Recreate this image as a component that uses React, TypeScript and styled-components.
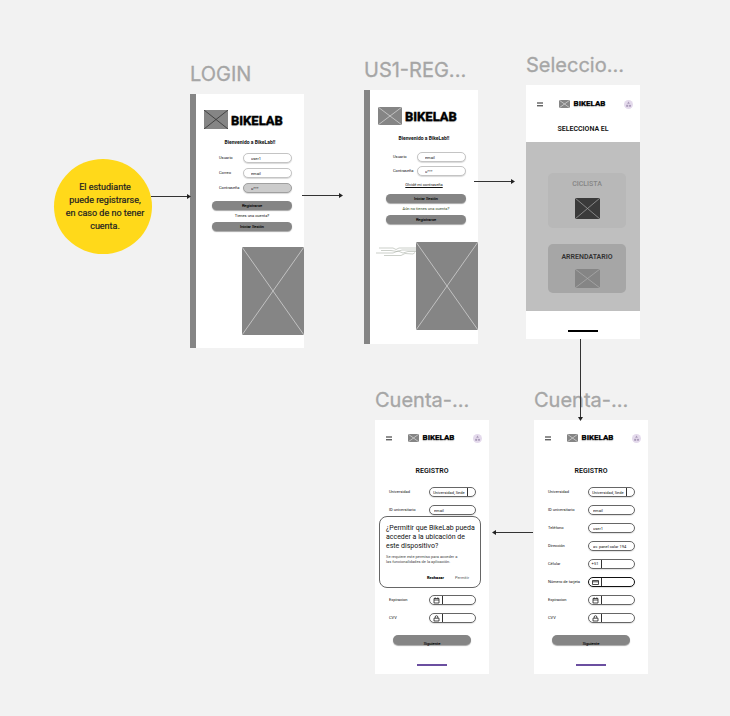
import React from "react";
import styled, { createGlobalStyle, css } from "styled-components";

const sans = `Roboto, "Liberation Sans", sans-serif`;

const GlobalStyle = createGlobalStyle`
  *, *::before, *::after { box-sizing: border-box; }
  body { margin: 0; background: #f2f2f2; }
  h2, h3, p { margin: 0; }
  button, input, select { font-family: inherit; font-size: inherit; color: inherit; margin: 0; padding: 0; border: 0; background: none; outline: none; }
`;

const Canvas = styled.main`
  position: relative;
  min-height: 100vh;
  background: #f2f2f2;
  font-family: ${sans};
  overflow: hidden;
`;

const Node = styled.section<{ $x: number; $y: number }>`
  position: absolute;
  left: ${(p) => p.$x}px;
  top: ${(p) => p.$y}px;
  width: 114px;
`;

const FrameTitle = styled.h2`
  font: 400 20px/24px Inter, sans-serif;
  -webkit-text-stroke: 0.3px #a6a6a6;
  color: #a6a6a6;
  white-space: nowrap;
  margin-bottom: 8px;
`;

const Screen = styled.div<{ $rail?: boolean }>`
  display: flex;
  flex-direction: column;
  height: 254px;
  background: #fff;
  font-size: 4px;
  line-height: 6px;
  color: #111;
  ${(p) => p.$rail && css`border-left: 6px solid #858585;`}
`;

const Note = styled.aside`
  position: absolute;
  left: 54px;
  top: 159px;
  width: 98px;
  height: 95px;
  border-radius: 50%;
  background: #ffd91a;
  display: flex;
  align-items: center;
  justify-content: center;
  text-align: center;
  font-size: 9px;
  line-height: 13px;
  color: #222;
  -webkit-text-stroke: 0.2px #222;
  padding-left: 4px;
`;

const Arrows = styled.svg`
  position: absolute;
  left: 0;
  top: 0;
  pointer-events: none;
`;

const Picture = styled.svg<{ $w: number; $h: number }>`
  display: block;
  flex: none;
  width: ${(p) => p.$w}px;
  height: ${(p) => p.$h}px;
`;

function Placeholder({ w, h, fill = "#858585", line = "#d0d0d0" }: { w: number; h: number; fill?: string; line?: string }) {
  return (
    <Picture $w={w} $h={h} viewBox={`0 0 ${w} ${h}`} aria-hidden="true">
      <rect width={w} height={h} fill={fill} />
      <path d={`M0 0L${w} ${h}M${w} 0L0 ${h}`} stroke={line} strokeWidth=".8" />
    </Picture>
  );
}

const Brand = styled.div<{ $top: number }>`
  display: flex;
  align-items: center;
  gap: 3px;
  padding: ${(p) => p.$top}px 0 0 8px;
`;

const Wordmark = styled.span<{ $small?: boolean }>`
  padding-top: ${(p) => (p.$small ? 0 : 2)}px;
  font-weight: 700;
  font-size: ${(p) => (p.$small ? 8 : 13)}px;
  line-height: ${(p) => (p.$small ? 10 : 16)}px;
  color: #000;
  -webkit-text-stroke: ${(p) => (p.$small ? "0.2px" : "0.4px")} #000;
  text-shadow: 0 1px 1px rgba(0, 0, 0, 0.3);
`;

const Welcome = styled.h3`
  font-size: 5px;
  line-height: 6px;
  font-weight: 700;
  text-align: center;
  margin-top: 10px;
`;

const AuthForm = styled.form<{ $top: number; $gap: number }>`
  display: flex;
  flex-direction: column;
  gap: ${(p) => p.$gap}px;
  margin-top: ${(p) => p.$top}px;
  padding: 0 12px 0 23px;
`;

const AuthRow = styled.label`
  display: grid;
  grid-template-columns: 1fr 49px;
  align-items: center;
`;

const AuthInput = styled.input<{ $filled?: boolean }>`
  width: 100%;
  height: 10px;
  padding-left: 7px;
  border: 1px solid ${(p) => (p.$filled ? "#a0a0a0" : "#c4c4c4")};
  border-radius: 5px;
  background: ${(p) => (p.$filled ? "#cccccc" : "#fff")};
  box-shadow: 0 1px 1px rgba(0, 0, 0, 0.15);
`;

const Actions = styled.div<{ $top: number }>`
  display: flex;
  flex-direction: column;
  align-items: stretch;
  text-align: center;
  gap: 3px;
  margin-top: ${(p) => p.$top}px;
  padding: 0 12px 0 16px;
`;

const Pill = styled.button`
  height: 9px;
  border-radius: 5px;
  background: #858585;
  box-shadow: 0 1px 1px rgba(0, 0, 0, 0.35);
  line-height: 9px;
  color: #000;
  -webkit-text-stroke: 0.1px #000;
`;

const Hint = styled.p<{ $green?: boolean }>`
  color: ${(p) => (p.$green ? "#2f4a1c" : "#111")};
`;

const Forgot = styled.a`
  color: #111;
  text-align: center;
  text-decoration: underline;
  margin-top: 6px;
`;

const Hero = styled.div<{ $top: number }>`
  display: flex;
  justify-content: flex-end;
  align-items: flex-start;
  margin-top: ${(p) => p.$top}px;
`;

const Scribble = styled.svg`
  flex: none;
  margin-top: 5px;
`;

const AppBar = styled.header<{ $top: number }>`
  display: grid;
  grid-template-columns: 28px 1fr 24px;
  align-items: center;
  padding-top: ${(p) => p.$top}px;
`;

const BarBrand = styled.div`
  display: flex;
  align-items: center;
  justify-content: center;
  gap: 4px;
  padding-right: 6px;
`;

const IconButton = styled.button`
  display: flex;
  justify-content: center;
  align-items: center;
`;

function MobileHeader({ top }: { top: number }) {
  return (
    <AppBar $top={top}>
      <IconButton aria-label="Menú">
        <svg width="6" height="5" viewBox="0 0 6 5"><path d="M0 1H6M0 3.800H6" stroke="#222" /></svg>
      </IconButton>
      <BarBrand>
        <Placeholder w={11} h={8} />
        <Wordmark $small>BIKELAB</Wordmark>
      </BarBrand>
      <IconButton aria-label="Perfil">
        <svg width="9" height="9" viewBox="0 0 9 9">
          <circle cx="4.5" cy="4.5" r="4.5" fill="#e4daec" />
          <path d="M4.5 1.600L5.800 3.800H3.200Z" fill="#a99ab8" />
          <rect x="2.200" y="4.800" width="2" height="2" fill="#a99ab8" />
          <circle cx="6" cy="5.800" r="1.100" fill="#a99ab8" />
        </svg>
      </IconButton>
    </AppBar>
  );
}

const ScreenTitle = styled.h3<{ $top: number }>`
  font-size: 7px;
  line-height: 8px;
  font-weight: 600;
  text-align: center;
  margin-top: ${(p) => p.$top}px;
`;

const Choices = styled.div`
  display: flex;
  flex-direction: column;
  align-items: stretch;
  gap: 16px;
  height: 169px;
  margin-top: 9px;
  padding: 31px 14px 0 22px;
  background: #bfbfbf;
`;

const Choice = styled.button<{ $strong?: boolean }>`
  display: flex;
  flex-direction: column;
  align-items: center;
  gap: ${(p) => (p.$strong ? 8 : 10)}px;
  height: ${(p) => (p.$strong ? 49 : 55)}px;
  padding-top: ${(p) => (p.$strong ? 9 : 7)}px;
  border-radius: 5px;
  background: ${(p) => (p.$strong ? "#a6a6a6" : "#b8b8b8")};
  color: ${(p) => (p.$strong ? "#333" : "#858585")};
  font-size: 7px;
  line-height: 8px;
  font-weight: ${(p) => (p.$strong ? 600 : 500)};
`;

const HomeBar = styled.div<{ $color: string; $top: number }>`
  width: 30px;
  height: 2px;
  margin: ${(p) => p.$top}px auto 0;
  background: ${(p) => p.$color};
`;

const Register = styled.form`
  display: flex;
  flex-direction: column;
  gap: 8px;
  margin-top: 12px;
  padding: 0 13px 0 14px;
`;

const Row = styled.label<{ $covered?: boolean }>`
  display: grid;
  grid-template-columns: 1fr 47px;
  align-items: center;
  white-space: nowrap;
  visibility: ${(p) => (p.$covered ? "hidden" : "visible")};
`;

const Box = styled.span<{ $strong?: boolean }>`
  display: flex;
  height: 10px;
  border: 1px solid ${(p) => (p.$strong ? "#111" : "#666")};
  border-radius: 5px;
  box-shadow: 0 1px 1px rgba(0, 0, 0, 0.12);
  background: #fff;
  overflow: hidden;
`;

const Prefix = styled.span`
  flex: none;
  width: 13px;
  display: flex;
  align-items: center;
  justify-content: center;
  border-right: 1px solid #333;
`;

const TextInput = styled.input`
  flex: 1;
  min-width: 0;
  padding-left: 4px;
`;

const Select = styled.select`
  appearance: none;
  width: 38px;
  padding-left: 3px;
  border-right: 1px solid #333;
`;

const Submit = styled(Pill)`
  height: 10px;
  margin: 12px 18px 0;
  padding-top: 6px;
  line-height: 6px;
`;

const icons = {
  card: <path d="M.5 1.500H6.500V5.500H.5ZM.5 2.800H6.500" />,
  calendar: <path d="M1 1.500H6V6H1ZM1 3H6M2.200 .4V1.600M4.800 .4V1.600" />,
  lock: <path d="M1 3.200H6V6H1ZM2.200 3V2A1.300 1.300 0 0 1 4.800 2V3" />,
};

function Glyph({ kind }: { kind: keyof typeof icons }) {
  return <svg width="7" height="7" viewBox="0 0 7 7" fill="none" stroke="#222" strokeWidth=".8" aria-hidden="true">{icons[kind]}</svg>;
}

type Field = { label: string; value?: string; select?: boolean; prefix?: string; icon?: keyof typeof icons; strong?: boolean };

const fields: Field[] = [
  { label: "Universidad", value: "Universidad, Sede", select: true },
  { label: "ID universitario", value: "email" },
  { label: "Teléfono", value: "user1" },
  { label: "Dirección", value: "av. panel calar 194" },
  { label: "Célular", prefix: "+51" },
  { label: "Número de tarjeta", icon: "card", strong: true },
  { label: "Expiracion", icon: "calendar" },
  { label: "CVV", icon: "lock" },
];

function AccountScreen({ children }: { children?: React.ReactNode }) {
  return (
    <Screen>
      <MobileHeader top={13} />
      <ScreenTitle $top={24}>REGISTRO</ScreenTitle>
      <Register>
        {fields.map((f, i) => (
          <Row key={f.label} $covered={Boolean(children) && i > 1 && i < 6}>
            {f.label}
            <Box $strong={f.strong}>
              {(f.prefix || f.icon) && <Prefix>{f.prefix}{f.icon && <Glyph kind={f.icon} />}</Prefix>}
              {f.select ? <Select><option>{f.value}</option></Select> : <TextInput defaultValue={f.value} />}
            </Box>
          </Row>
        ))}
      </Register>
      <Submit>Siguiente</Submit>
      <HomeBar $color="#6b4fa0" $top={19} />
      {children}
    </Screen>
  );
}

const Dialog = styled.div`
  position: absolute;
  left: 4px;
  top: 128px;
  width: 102px;
  height: 72px;
  padding: 7px 6px 0;
  background: #fff;
  border: 1px solid #666;
  border-radius: 8px;
  line-height: 5px;
  color: #444;
`;

const DialogTitle = styled.h3`
  font-size: 7px;
  line-height: 9px;
  font-weight: 400;
  color: #111;
  white-space: nowrap;
  margin-bottom: 3px;
`;

const DialogActions = styled.div`
  display: flex;
  justify-content: flex-end;
  gap: 11px;
  margin-top: 11px;
  padding-right: 5px;
`;

const DialogButton = styled.button<{ $bold?: boolean }>`
  font-weight: ${(p) => (p.$bold ? 900 : 400)};
  color: ${(p) => (p.$bold ? "#000" : "#555")};
`;

export default function App() {
  return (
    <>
      <GlobalStyle />
      <Canvas>
        <Note>El estudiante<br />puede registrarse,<br />en caso de no tener<br />cuenta.</Note>

        <Node $x={190} $y={62}>
          <FrameTitle>LOGIN</FrameTitle>
          <Screen $rail>
            <Brand $top={16}><Placeholder w={24} h={19} line="#333" /><Wordmark>BIKELAB</Wordmark></Brand>
            <Welcome>Bienvenido a BikeLab!!</Welcome>
            <AuthForm $top={8} $gap={5}>
              <AuthRow>Usuario<AuthInput defaultValue="user1" /></AuthRow>
              <AuthRow>Correo<AuthInput defaultValue="email" /></AuthRow>
              <AuthRow>Contraseña<AuthInput defaultValue="u***" $filled /></AuthRow>
            </AuthForm>
            <Actions $top={8}>
              <Pill>Registrarse</Pill>
              <Hint>Tienes una cuenta?</Hint>
              <Pill>Iniciar Sesión</Pill>
            </Actions>
            <Hero $top={16}><Placeholder w={62} h={88} /></Hero>
          </Screen>
        </Node>

        <Node $x={364} $y={58}>
          <FrameTitle>US1-REG...</FrameTitle>
          <Screen $rail>
            <Brand $top={17}><Placeholder w={24} h={18} /><Wordmark>BIKELAB</Wordmark></Brand>
            <Welcome>Bienvenido a BikeLab!!</Welcome>
            <AuthForm $top={11} $gap={4}>
              <AuthRow>Usuario<AuthInput defaultValue="email" /></AuthRow>
              <AuthRow>Contraseña<AuthInput defaultValue="u***" /></AuthRow>
            </AuthForm>
            <Forgot href="#">Olvidé mi contraseña</Forgot>
            <Actions $top={6}>
              <Pill>Iniciar Sesión</Pill>
              <Hint $green>Aún no tienes una cuenta?</Hint>
              <Pill>Registrarse</Pill>
            </Actions>
            <Hero $top={18}>
              <Scribble width="40" height="10" viewBox="0 0 40 10" fill="none" stroke="#a9b0a6" strokeWidth=".6" aria-hidden="true">
                <path d="M3 1H17L20 2.500L23 1H40M5 3.500H15L21 4.500L26 3H40M0 6H17L22 4L27 6L32 4.500H40M8 8.500H25L29 6.500L37 7L39 5.500" />
              </Scribble>
              <Placeholder w={62} h={88} />
            </Hero>
          </Screen>
        </Node>

        <Node $x={526} $y={53}>
          <FrameTitle>Seleccio...</FrameTitle>
          <Screen>
            <MobileHeader top={14} />
            <ScreenTitle $top={16}>SELECCIONA EL</ScreenTitle>
            <Choices>
              <Choice>CICLISTA<Placeholder w={25} h={21} fill="#3a3a3a" line="#999" /></Choice>
              <Choice $strong>ARRENDATARIO<Placeholder w={25} h={19} line="#aaa" /></Choice>
            </Choices>
            <HomeBar $color="#000" $top={19} />
          </Screen>
        </Node>

        <Node $x={375} $y={388}>
          <FrameTitle>Cuenta-...</FrameTitle>
          <AccountScreen>
            <Dialog role="dialog" aria-label="Permiso de ubicación">
              <DialogTitle>¿Permitir que BikeLab pueda<br />acceder a la ubicación de<br />este dispositivo?</DialogTitle>
              <p>Se requiere este permiso para acceder a<br />las funcionalidades de la aplicación.</p>
              <DialogActions>
                <DialogButton $bold>Rechazar</DialogButton>
                <DialogButton>Permitir</DialogButton>
              </DialogActions>
            </Dialog>
          </AccountScreen>
        </Node>

        <Node $x={534} $y={388}>
          <FrameTitle>Cuenta-...</FrameTitle>
          <AccountScreen />
        </Node>

        <Arrows width="730" height="716" viewBox="0 0 730 716" fill="none" stroke="#333" aria-hidden="true">
          <path d="M151 196.500H189M302 195.500H341M474 181.500H513M580.500 339V419M533 532.500H494" />
          <path fill="#222" stroke="none" d="M187 194L191 196.500L187 199ZM339 193L343 195.500L339 198ZM511 179L515 181.500L511 184ZM578 417L580.500 421L583 417ZM496 530L492 532.500L496 535Z" />
        </Arrows>
      </Canvas>
    </>
  );
}
